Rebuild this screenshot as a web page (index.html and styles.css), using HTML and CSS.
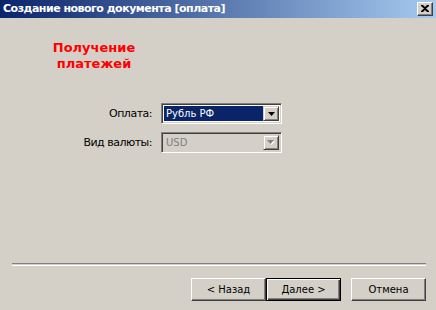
FILE: index.html
```html
<!DOCTYPE html>
<html lang="ru">
<head>
    <meta charset="UTF-8">
    <title>Создание нового документа [оплата]</title>
    <link rel="stylesheet" href="styles.css">
</head>
<body>
    <div class="window">
        <div class="titlebar">
            <span class="caption">Создание нового документа [оплата]</span>
            <span class="close-btn">
                <svg width="8" height="7" viewBox="0 0 8 7">
                    <path d="M0 0h2l2 2 2-2h2v1l-3 2.5 3 2.5v1h-2l-2-2-2 2h-2v-1l3-2.5-3-2.5z" fill="#000"/>
                </svg>
            </span>
        </div>

        <div class="main">
            <div class="heading">Получение<br>платежей</div>

            <div class="form">
                <label class="label">Оплата:</label>
                <div class="combo">
                    <div class="combo-value selected">Рубль РФ</div>
                    <div class="combo-arrow">
                        <svg width="7" height="4" viewBox="0 0 7 4"><path d="M0 0h7l-3.5 4z" fill="#000"/></svg>
                    </div>
                </div>

                <label class="label">Вид валюты:</label>
                <div class="combo disabled">
                    <div class="combo-value">USD</div>
                    <div class="combo-arrow">
                        <svg width="8" height="5" viewBox="0 0 8 5">
                            <path d="M1 1h7l-3.5 4z" fill="#fff"/>
                            <path d="M0 0h7l-3.5 4z" fill="#808080"/>
                        </svg>
                    </div>
                </div>
            </div>
        </div>

        <div class="footer">
            <div class="separator"></div>
            <div class="buttons">
                <button class="btn">&lt; Назад</button>
                <button class="btn default">Далее &gt;</button>
                <button class="btn cancel">Отмена</button>
            </div>
        </div>
    </div>
</body>
</html>
```

FILE: styles.css
```css
body {
    margin: 0;
    font-family: 'DejaVu Sans', Tahoma, sans-serif;
    font-size: 10px;
    color: #000;
    background-color: #d4d0c8;
}
.window {
    width: 436px;
    height: 310px;
    display: flex;
    flex-direction: column;
    background-color: #d4d0c8;
}
.titlebar {
    height: 18px;
    display: flex;
    align-items: center;
    justify-content: space-between;
    padding: 0 3px 0 3px;
    background: linear-gradient(to right, #0a246a, #a6caf0);
    color: #fff;
    font-weight: bold;
    font-size: 11px;
}
.caption {
    margin-top: -1px;
    letter-spacing: -0.5px;
}
.close-btn {
    width: 16px;
    height: 14px;
    box-sizing: border-box;
    display: flex;
    align-items: center;
    justify-content: center;
    background-color: #d4d0c8;
    border-top: 1px solid #fff;
    border-left: 1px solid #fff;
    border-right: 1px solid #404040;
    border-bottom: 1px solid #404040;
    box-shadow: inset -1px -1px 0 #808080;
    margin-top: -1px;
}
.main {
    flex: 1;
}
.heading {
    width: 160px;
    margin: 22px 0 0 14px;
    text-align: center;
    color: #ff0000;
    font-weight: bold;
    font-size: 13px;
    line-height: 16px;
}
.form {
    display: grid;
    grid-template-columns: 152px 121px;
    column-gap: 9px;
    row-gap: 8px;
    align-items: center;
    margin-top: 31px;
}
.label {
    text-align: right;
    font-size: 11px;
    letter-spacing: -0.5px;
}
.combo {
    height: 21px;
    box-sizing: border-box;
    display: flex;
    background-color: #fff;
    border-top: 1px solid #808080;
    border-left: 1px solid #808080;
    border-right: 1px solid #fff;
    border-bottom: 1px solid #fff;
    box-shadow: inset 1px 1px 0 #404040, inset -1px -1px 0 #d4d0c8;
    padding: 2px;
}
.combo-value {
    flex: 1;
    padding-left: 2px;
    line-height: 15px;
}
.combo-value.selected {
    background-color: #0a246a;
    color: #fff;
}
.combo-arrow {
    width: 16px;
    box-sizing: border-box;
    display: flex;
    align-items: center;
    justify-content: center;
    background-color: #d4d0c8;
    border-top: 1px solid #d4d0c8;
    border-left: 1px solid #d4d0c8;
    border-right: 1px solid #404040;
    border-bottom: 1px solid #404040;
    box-shadow: inset 1px 1px 0 #fff, inset -1px -1px 0 #808080;
}
.combo.disabled {
    background-color: #d4d0c8;
}
.combo.disabled .combo-value {
    color: #808080;
}
.footer {
    padding-bottom: 9px;
}
.separator {
    height: 1px;
    margin: 0 10px 12px 12px;
    border-top: 1px solid #808080;
    border-bottom: 1px solid #fff;
}
.buttons {
    display: flex;
    justify-content: flex-end;
    padding-right: 10px;
}
.btn {
    width: 75px;
    height: 23px;
    box-sizing: border-box;
    font-family: 'DejaVu Sans', Tahoma, sans-serif;
    font-size: 10px;
    color: #000;
    background-color: #d4d0c8;
    border-top: 1px solid #fff;
    border-left: 1px solid #fff;
    border-right: 1px solid #404040;
    border-bottom: 1px solid #404040;
    box-shadow: inset -1px -1px 0 #808080;
    padding: 0;
}
.btn.default {
    border: 1px solid #000;
    box-shadow: inset 1px 1px 0 #fff, inset -1px -1px 0 #404040, inset -2px -2px 0 #808080;
}
.btn.cancel {
    margin-left: 10px;
}
```
